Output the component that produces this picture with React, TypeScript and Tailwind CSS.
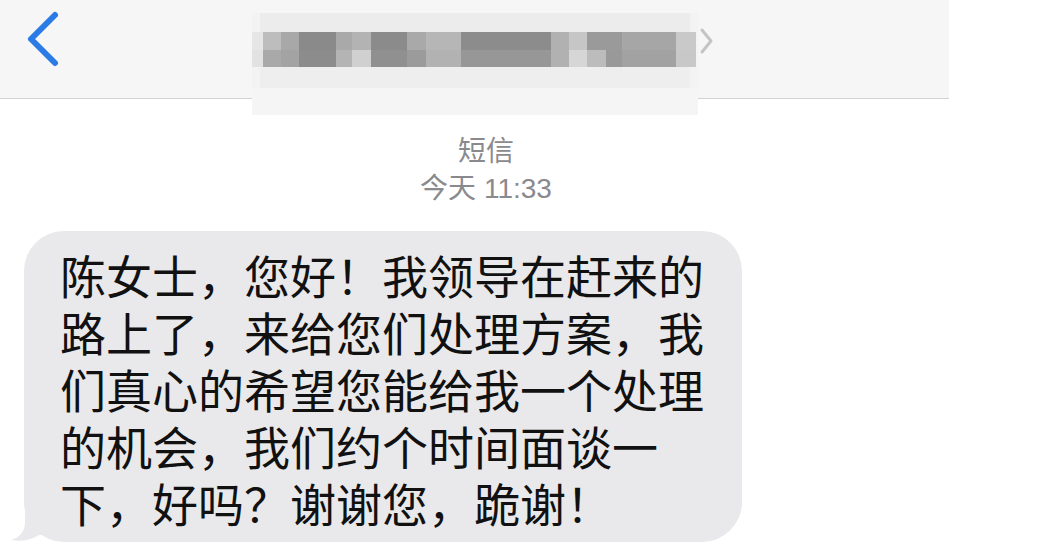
import React from 'react';

// blurred contact name in the nav bar, column by column: [x, width, top, bottom]
const mosaic: [number, number, string, string][] = [
  [0, 11, '#e6e6e6', '#e2e2e2'],
  [11, 18, '#bdbdbd', '#a9a9a9'],
  [29, 18, '#a8a8a8', '#a3a3a3'],
  [47, 37, '#8a8a8a', '#8c8c8c'],
  [84, 16, '#a9a9a9', '#b4b4b4'],
  [100, 19, '#b3b3b3', '#d0d0d0'],
  [119, 36, '#8b8b8b', '#909090'],
  [155, 19, '#a9a9a9', '#9b9b9b'],
  [174, 35, '#b6b6b6', '#b2b2b2'],
  [209, 90, '#8c8c8c', '#979797'],
  [299, 18, '#b1b1b1', '#b1b1b1'],
  [317, 18, '#c6c6c6', '#d6d6d6'],
  [335, 19, '#9a9a9a', '#bcbcbc'],
  [354, 16, '#9a9a9a', '#999999'],
  [370, 54, '#a6a6a6', '#a2a2a2'],
  [424, 20, '#c9c9c9', '#c8c8c8'],
];

const lines = [
  '陈女士，您好！我领导在赶来的',
  '路上了，来给您们处理方案，我',
  '们真心的希望您能给我一个处理',
  '的机会，我们约个时间面谈一',
  '下，好吗？谢谢您，跪谢！',
];

const BlurredName = () => (
  <svg width="446" height="102" viewBox="0 0 446 102" className="block">
    <rect x="0" y="0" width="446" height="102" fill="#f3f3f3" />
    <rect x="8" y="0" width="430" height="19" fill="#ececec" />
    {mosaic.map(([x, w, top, bottom], i) => (
      <g key={i}>
        <rect x={x} y="19" width={w} height="18" fill={top} />
        <rect x={x} y="37" width={w} height="17" fill={bottom} />
      </g>
    ))}
    <rect x="8" y="54" width="430" height="21" fill="#eeeeee" />
    <rect x="0" y="75" width="446" height="27" fill="#f5f5f5" />
  </svg>
);

export default function App() {
  return (
    <div className="w-[1045px] h-[547px] bg-white overflow-hidden" style={{ fontFamily: '"Liberation Sans", "Noto Sans CJK SC", sans-serif' }}>
      {/* nav bar */}
      <div className="relative w-[949px] h-[99px] bg-[#f6f6f6] border-b-[1.5px] border-[#d3d3d3]">
        <svg width="70" height="80" viewBox="0 0 70 80" className="absolute left-0 top-0">
          <polyline points="55,15 31,39 55,63" fill="none" stroke="#2a7be6" strokeWidth="6" strokeLinecap="round" strokeLinejoin="round" />
        </svg>
        <div className="absolute left-[252px] top-[13px]">
          <BlurredName />
        </div>
        <svg width="20" height="30" viewBox="0 0 20 30" className="absolute left-[698px] top-[26px]">
          <polyline points="4,4 13,15 4,26" fill="none" stroke="#c4c4c4" strokeWidth="3" strokeLinecap="round" strokeLinejoin="round" />
        </svg>
      </div>

      {/* timestamp */}
      <div className="w-[972px] mt-[34px] flex flex-col items-center text-[28px] leading-[37px] text-[#8a8a8e]">
        <div>短信</div>
        <div>今天 11:33</div>
      </div>

      {/* message bubble */}
      <div className="relative ml-[24px] mt-[24px] w-[718px]">
        <svg width="40" height="40" viewBox="0 0 40 40" className="absolute left-[-13px] bottom-[0px]">
          <path d="M14 0 L14 20 C14 30 8 36 0 38 C10 40 20 38 28 33 L40 33 L40 0 Z" fill="#e9e9eb" />
        </svg>
        <div className="relative bg-[#e9e9eb] rounded-[40px] pl-[36px] pr-[30px] pt-[19px] pb-[7px] text-[46px] leading-[57px] text-[#111111] whitespace-nowrap">
          {lines.map((l, i) => (
            <div key={i}>{l}</div>
          ))}
        </div>
      </div>
    </div>
  );
}
